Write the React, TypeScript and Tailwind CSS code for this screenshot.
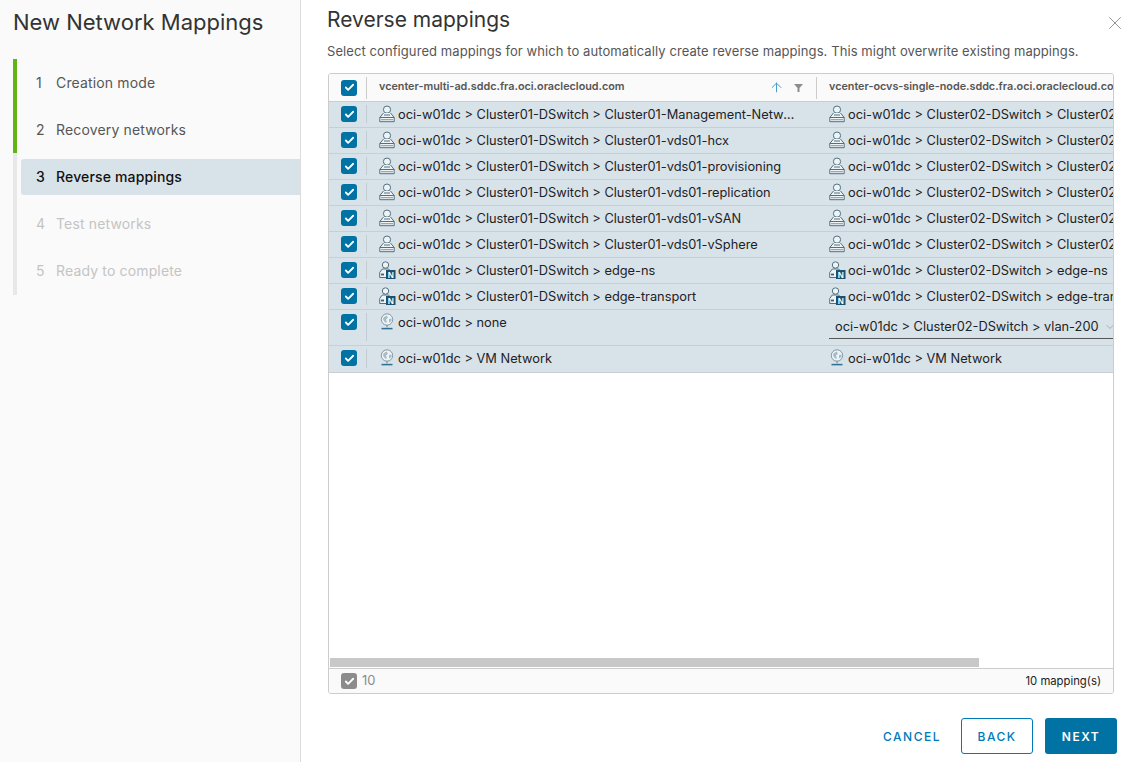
import React from 'react';
import { X, ChevronDown, ArrowUp, Check } from 'lucide-react';

type Kind = 'switch' | 'nsx' | 'globe';

interface MappingRow {
  kind: Kind;
  source: string;
  target: string;
  select?: boolean;
}

const rows: MappingRow[] = [
  { kind: 'switch', source: 'oci-w01dc > Cluster01-DSwitch > Cluster01-Management-Network', target: 'oci-w01dc > Cluster02-DSwitch > Cluster02-Management-Network' },
  { kind: 'switch', source: 'oci-w01dc > Cluster01-DSwitch > Cluster01-vds01-hcx', target: 'oci-w01dc > Cluster02-DSwitch > Cluster02-vds01-hcx' },
  { kind: 'switch', source: 'oci-w01dc > Cluster01-DSwitch > Cluster01-vds01-provisioning', target: 'oci-w01dc > Cluster02-DSwitch > Cluster02-vds01-provisioning' },
  { kind: 'switch', source: 'oci-w01dc > Cluster01-DSwitch > Cluster01-vds01-replication', target: 'oci-w01dc > Cluster02-DSwitch > Cluster02-vds01-replication' },
  { kind: 'switch', source: 'oci-w01dc > Cluster01-DSwitch > Cluster01-vds01-vSAN', target: 'oci-w01dc > Cluster02-DSwitch > Cluster02-vds01-vSAN' },
  { kind: 'switch', source: 'oci-w01dc > Cluster01-DSwitch > Cluster01-vds01-vSphere', target: 'oci-w01dc > Cluster02-DSwitch > Cluster02-vds01-vSphere' },
  { kind: 'nsx', source: 'oci-w01dc > Cluster01-DSwitch > edge-ns', target: 'oci-w01dc > Cluster02-DSwitch > edge-ns' },
  { kind: 'nsx', source: 'oci-w01dc > Cluster01-DSwitch > edge-transport', target: 'oci-w01dc > Cluster02-DSwitch > edge-transport' },
  { kind: 'globe', source: 'oci-w01dc > none', target: 'oci-w01dc > Cluster02-DSwitch > vlan-200', select: true },
  { kind: 'globe', source: 'oci-w01dc > VM Network', target: 'oci-w01dc > VM Network' },
];

const steps = [
  { n: 1, label: 'Creation mode', state: 'done' },
  { n: 2, label: 'Recovery networks', state: 'done' },
  { n: 3, label: 'Reverse mappings', state: 'active' },
  { n: 4, label: 'Test networks', state: 'off' },
  { n: 5, label: 'Ready to complete', state: 'off' },
];

const NetIcon: React.FC<{ kind: Kind }> = ({ kind }) => {
  if (kind === 'globe') {
    return (
      <svg width="16" height="18" viewBox="0 0 16 18" fill="none">
        <circle cx="8" cy="6.5" r="5.7" fill="#eef3f6" stroke="#7f98a6" />
        <path d="M4.5 4.5l3-2 1.5 2-2 2 1 3-2 0-2-3zM10 6l2.5-.5 0 2.5-2.5 1.5z" fill="#a9bbc5" />
        <path d="M8 12.2v2.3" stroke="#6d8796" />
        <path d="M2.5 15.6h11" stroke="#2f6f8f" strokeWidth="1.5" />
      </svg>
    );
  }
  if (kind === 'nsx') {
    return (
      <svg width="17" height="18" viewBox="0 0 17 18" fill="none">
        <circle cx="6.5" cy="4" r="3.2" fill="#eef3f6" stroke="#52707f" />
        <path d="M.7 16.5v-5l2.6-3.5h6.4l1 1.5v7z" fill="#eef3f6" stroke="#52707f" />
        <path d="M2 13.5h3" stroke="#3f5f70" strokeWidth="1.8" />
        <rect x="7" y="9" width="9.5" height="9" fill="#1d4f6e" />
        <text x="11.8" y="16.5" textAnchor="middle" fontSize="8.5" fontWeight="700" fill="#fff" fontFamily="'Liberation Sans', sans-serif">N</text>
      </svg>
    );
  }
  return (
    <svg width="16" height="18" viewBox="0 0 16 18" fill="none">
      <circle cx="8" cy="4.6" r="3.6" fill="#eef3f6" stroke="#52707f" />
      <path d="M4.5 8L.8 12.5v4.2h14.4v-4.2L11.5 8" fill="#eef3f6" stroke="#52707f" />
      <path d="M.8 12.5h14.4" stroke="#52707f" />
      <path d="M2.5 14.7h11" stroke="#3f5f70" strokeDasharray="1 1" strokeWidth="1.2" />
      <path d="M5 10h6" stroke="#52707f" />
    </svg>
  );
};

const Box: React.FC<{ muted?: boolean }> = ({ muted }) => (
  <span className={`flex h-4 w-4 items-center justify-center rounded-[3px] ${muted ? 'bg-[#8c8c8c]' : 'bg-[#0072a3]'}`}>
    <Check size={11} strokeWidth={4} className="text-white" />
  </span>
);

export default function App() {
  return (
    <div className="flex h-[762px] w-[1134px] overflow-hidden bg-white font-['Inter','Liberation_Sans',sans-serif] text-[12.8px] text-[#1c2226]">
      <aside className="w-[301px] shrink-0 border-r border-[#dcdcdc] bg-[#fafafa]">
        <h1 className="pl-[13px] pt-[7px] text-[22px] leading-[30px] text-[#333]">New Network Mappings</h1>
        <div className="relative ml-[13px] mt-[22px] flex h-[236px] flex-col gap-[11px] border-l-4 border-[#e8e8e8] pl-[4px] pt-[6px] text-[14px] tracking-[0.15px]">
          <div className="absolute -left-1 top-0 h-[94px] w-1 bg-[#60b515]" />
          {steps.map((s) => (
            <div
              key={s.n}
              className={`flex h-9 shrink-0 items-center rounded-l-[3px] pb-[2px] pl-[15px] ${
                s.state === 'active' ? 'bg-[#d8e3e9] font-medium text-[#111]' : s.state === 'off' ? 'text-[#c4c4c4]' : 'text-[#565656]'
              }`}
            >
              <span className="w-[20px]">{s.n}</span>
              <span>{s.label}</span>
            </div>
          ))}
        </div>
      </aside>

      <main className="flex min-w-0 flex-1 flex-col pl-[27px] pr-[20px]">
        <div className="relative">
          <h2 className="-ml-px pt-[5px] text-[21px] leading-[30px] text-[#333]">Reverse mappings</h2>
          <X size={22} strokeWidth={1} className="absolute right-[-12px] top-[12px] text-[#8c8c8c]" />
        </div>
        <p className="-ml-px mt-[7px] whitespace-nowrap text-[13px] leading-[18px] tracking-[0.08px] text-[#565656]">
          Select configured mappings for which to automatically create reverse mappings. This might overwrite existing mappings.
        </p>

        <section className="mt-[13px] flex h-[621px] w-[786px] flex-col overflow-hidden rounded-[3px] border border-[#cccccc]">
          <div className="flex h-[28px] shrink-0 items-center border-b border-[#ccc] bg-[#fafafa] text-[10.8px] font-semibold text-[#565656]">
            <div className="flex w-[37px] shrink-0 justify-center pl-[3px]">
              <Box />
            </div>
            <div className="flex h-[22px] w-[450px] shrink-0 items-center border-l border-[#ccc] pl-[12px]">
              <span className="flex-1">vcenter-multi-ad.sddc.fra.oci.oraclecloud.com</span>
              <ArrowUp size={15} strokeWidth={1.6} className="mr-[10px] text-[#4a9ccc]" />
              <svg width="9" height="9" viewBox="0 0 9 9" className="mr-[13px]">
                <path d="M0 1h9L5.5 5v4h-2V5z" fill="#8c8c8c" />
              </svg>
            </div>
            <div className="flex h-[22px] flex-1 items-center overflow-hidden whitespace-nowrap border-l border-[#ccc] pl-[12px]">
              vcenter-ocvs-single-node.sddc.fra.oci.oraclecloud.com
            </div>
          </div>

          <div className="flex-1 overflow-hidden">
            {rows.map((r) => (
              <div
                key={r.source}
                className={`flex border-b border-[#c5cfd5] bg-[#d8e3e9] ${r.select ? 'h-[36px]' : r.kind === 'globe' ? 'h-[27px]' : 'h-[26px]'}`}
              >
                <div className="flex w-[37px] shrink-0 justify-center pl-[3px] pt-[4px]">
                  <Box />
                </div>
                <div className="mb-[4px] mt-[3px] flex w-[450px] shrink-0 items-start border-l border-[#c2ccd2] pl-[12px]">
                  <span className="w-[19px] shrink-0">
                    <NetIcon kind={r.kind} />
                  </span>
                  <span className="mr-[14px] mt-[2px] truncate leading-[16px]">{r.source}</span>
                </div>
                {r.select ? (
                  <div className="flex min-w-0 flex-1 pl-[13px] pt-[4px]">
                    <div className="flex h-[25px] w-full items-center border-b border-[#565656] pl-[6px] pt-[2px]">
                      <span className="whitespace-nowrap">{r.target}</span>
                      <ChevronDown size={12} className="ml-[5px] shrink-0 text-[#a9a9a9]" />
                    </div>
                  </div>
                ) : (
                  <div className="mb-[4px] mt-[3px] flex min-w-0 flex-1 items-start border-l border-transparent pl-[12px]">
                    <span className="w-[19px] shrink-0">
                      <NetIcon kind={r.kind} />
                    </span>
                    <span className="mt-[2px] whitespace-nowrap leading-[16px]">{r.target}</span>
                  </div>
                )}
              </div>
            ))}
          </div>

          <div className="h-[10px] shrink-0 pl-[1px]">
            <div className="h-[9px] w-[649px] bg-[#c8c8c8]" />
          </div>
          <div className="flex h-[25px] shrink-0 items-center justify-between border-t border-[#ccc] bg-[#fafafa] pl-[12px] pr-[12px]">
            <div className="flex items-center gap-[5px] text-[13px] text-[#8c8c8c]">
              <Box muted />
              <span>10</span>
            </div>
            <span className="text-[11.3px]">10 mapping(s)</span>
          </div>
        </section>

        <div className="mt-[24px] flex w-[789px] items-center justify-end text-[12px] font-medium tracking-[1.5px]">
          <button className="mr-[20px] pt-[1px] text-[#0079b8]">CANCEL</button>
          <button className="mr-[12px] h-9 w-[72px] rounded-[3px] border border-[#0079b8] bg-white pt-[1px] text-[#0079b8]">BACK</button>
          <button className="h-9 w-[72px] rounded-[3px] bg-[#0072a3] pt-[1px] font-semibold text-white">NEXT</button>
        </div>
      </main>
    </div>
  );
}
